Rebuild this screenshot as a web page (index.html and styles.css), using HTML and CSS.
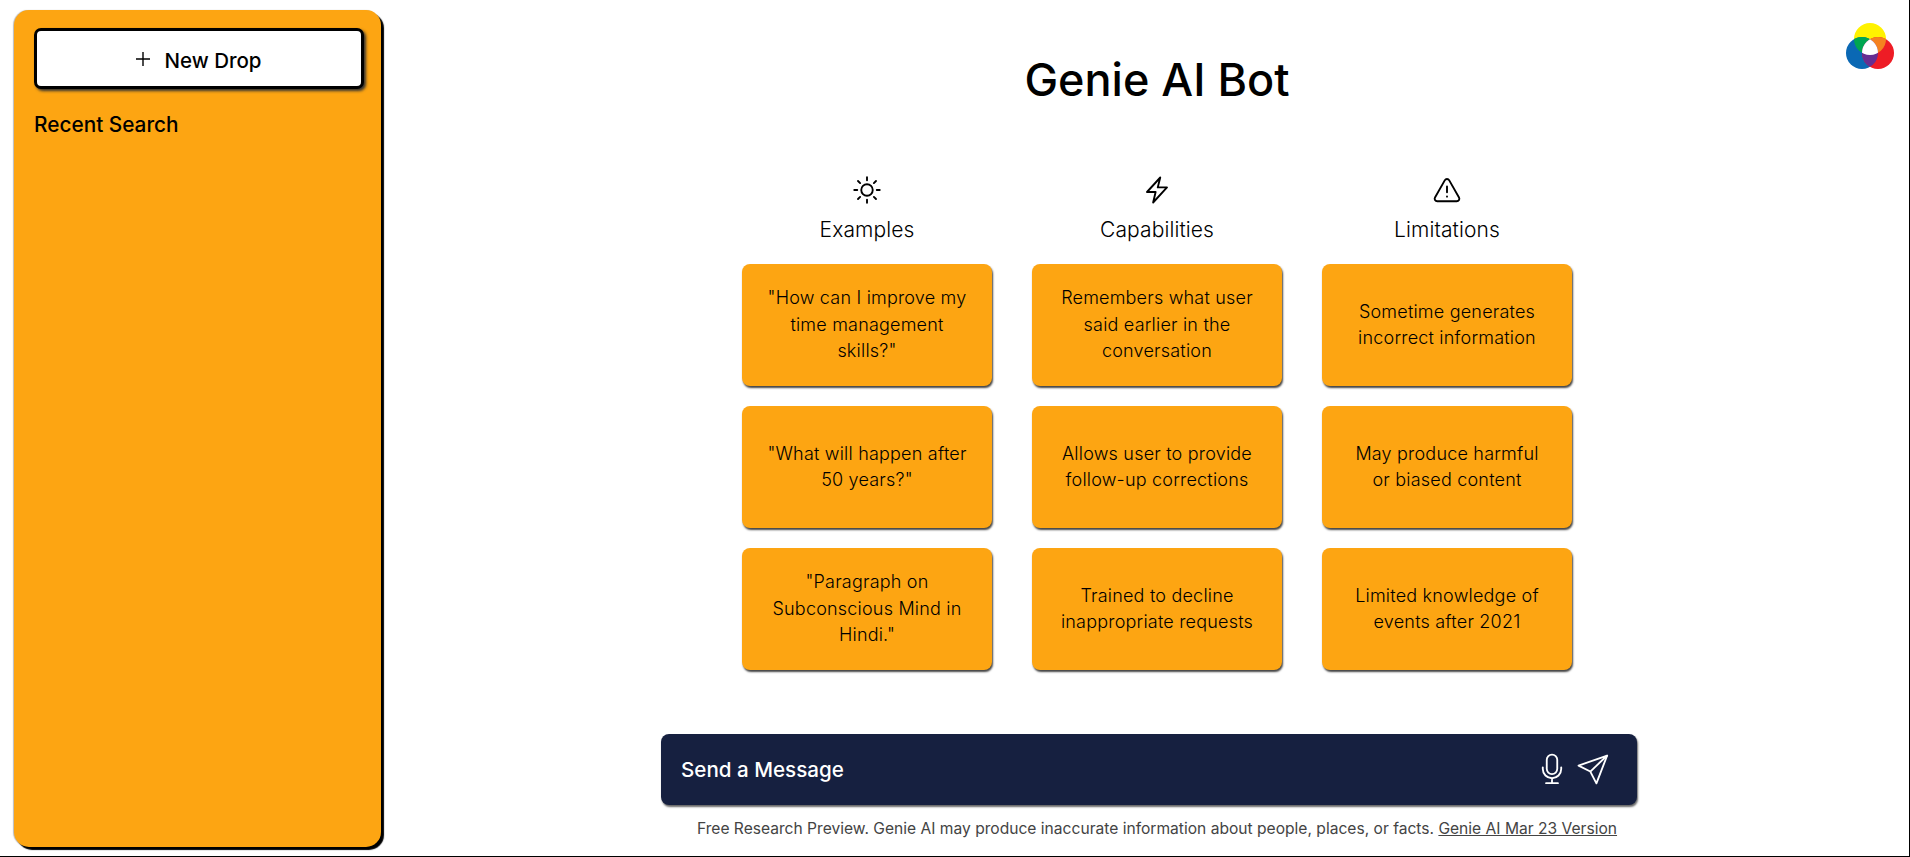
FILE: index.html
```html
<!DOCTYPE html>
<html lang="en">
<head>
<meta charset="utf-8">
<title>Genie AI Bot</title>
<link rel="stylesheet" href="styles.css">
</head>
<body>
<div class="app">
  <aside class="sidebar">
    <button class="new-drop"><svg class="plus" viewBox="0 0 14 14" width="14" height="14" fill="none" stroke="#000" stroke-width="1.4"><path d="M7 0v14M0 7h14"/></svg><span>New Drop</span></button>
    <h2 class="recent">Recent Search</h2>
  </aside>
  <main class="main">
    <h1 class="title">Genie AI Bot</h1>
    <div class="grid">
      <section class="col">
        <svg class="col-icon" viewBox="0 0 24 24" width="30" height="30" fill="none" stroke="#000" stroke-width="1.5" stroke-linecap="round"><circle cx="12" cy="12" r="4.6"/><path d="M12 1.800v2.400M12 19.800v2.400M1.800 12h2.400M19.800 12h2.400M4.800 4.800l1.700 1.700M17.500 17.500l1.700 1.700M4.800 19.200l1.700-1.700M17.500 6.500l1.700-1.700"/></svg>
        <h3 class="col-title">Examples</h3>
        <div class="card">"How can I improve my time management skills?"</div>
        <div class="card">"What will happen after 50 years?"</div>
        <div class="card">"Paragraph on Subconscious Mind in Hindi."</div>
      </section>
      <section class="col">
        <svg class="col-icon" viewBox="0 0 24 24" width="30" height="30" fill="none" stroke="#000" stroke-width="1.5" stroke-linejoin="round"><path d="M14.600 2 4 13.600h6.900L8.900 22 20 9.900h-7.400z"/></svg>
        <h3 class="col-title">Capabilities</h3>
        <div class="card">Remembers what user said earlier in the conversation</div>
        <div class="card">Allows user to provide follow-up corrections</div>
        <div class="card">Trained to decline inappropriate requests</div>
      </section>
      <section class="col">
        <svg class="col-icon" viewBox="0 0 24 24" width="30" height="30" fill="none" stroke="#000" stroke-width="1.5" stroke-linecap="round" stroke-linejoin="round"><path d="M12 3.200c-.8 0-1.400.4-1.800 1.100L2.400 18c-.8 1.400.2 3 1.800 3h15.600c1.600 0 2.600-1.600 1.800-3L13.800 4.300c-.4-.7-1-1.100-1.800-1.100z"/><path d="M12 9.200v4.600M12 17.200v.1"/></svg>
        <h3 class="col-title">Limitations</h3>
        <div class="card">Sometime generates incorrect information</div>
        <div class="card">May produce harmful or biased content</div>
        <div class="card">Limited knowledge of events after 2021</div>
      </section>
    </div>
    <div class="composer">
      <span class="prompt">Send a Message</span>
      <div class="composer-icons">
        <svg viewBox="0 0 24 24" width="34" height="34" fill="none" stroke="#fff" stroke-width="1.3" stroke-linecap="round"><rect x="8.300" y="1.800" width="7.400" height="13.800" rx="3.700"/><path d="M5.500 10.800v1.200a6.500 6.500 0 0 0 13 0v-1.200M12 18.500v3.500M7.800 22h8.400"/></svg>
        <svg viewBox="0 0 24 24" width="34" height="34" fill="none" stroke="#fff" stroke-width="1.3" stroke-linejoin="round"><path d="M22 2.500 1.800 9.600l8.300 4.200 4.300 8.300z"/><path d="M22 2.500 10.100 13.800"/></svg>
      </div>
    </div>
    <p class="note">Free Research Preview. Genie AI may produce inaccurate information about people, places, or facts. <a href="#">Genie AI Mar 23 Version</a></p>
  </main>
  <svg class="logo" viewBox="0 0 48 46" width="48" height="46">
    <defs>
      <clipPath id="clip-y"><circle cx="24" cy="16" r="16"/></clipPath>
      <clipPath id="clip-b"><circle cx="16" cy="30" r="16"/></clipPath>
      <clipPath id="clip-r"><circle cx="32" cy="30" r="16"/></clipPath>
    </defs>
    <circle cx="24" cy="16" r="16" fill="#fff200"/>
    <circle cx="16" cy="30" r="16" fill="#0a68b4"/>
    <circle cx="32" cy="30" r="16" fill="#ee1c25"/>
    <circle cx="16" cy="30" r="16" fill="#00a651" clip-path="url(#clip-y)"/>
    <circle cx="32" cy="30" r="16" fill="#f58220" clip-path="url(#clip-y)"/>
    <circle cx="32" cy="30" r="16" fill="#662d91" clip-path="url(#clip-b)"/>
    <g clip-path="url(#clip-y)"><circle cx="32" cy="30" r="16" fill="#fff" clip-path="url(#clip-b)"/></g>
  </svg>
</div>
</body>
</html>
```
FILE: styles.css
```css
* { box-sizing: border-box; }
html, body { margin: 0; padding: 0; height: 100%; background: #fff; overflow: hidden; }
body { font-family: "Inter", "Liberation Sans", sans-serif; color: #000; }
.app {
  position: relative;
  display: flex;
  width: 1910px;
  height: 857px;
  border-right: 1px solid #000;
  border-bottom: 1px solid #000;
}
.sidebar {
  flex: none;
  width: 367px;
  height: 837px;
  margin: 10px 0 0 14px;
  padding: 18px 20px;
  background: #fda512;
  border-radius: 15px;
  box-shadow: 3px 3px 1px #000, -1px 0 1px #bbb;
}
.new-drop {
  display: flex;
  align-items: center;
  justify-content: center;
  gap: 14px;
  width: 330px;
  height: 61px;
  padding-top: 4px;
  background: #fff;
  border: 3px solid #000;
  border-radius: 7px;
  box-shadow: 2px 2px 3px #333;
  font: 500 20.5px "Inter", sans-serif;
  color: #000;
}
.plus { display: block; margin-top: -2px; }
.recent { margin: 21px 0 0; font-size: 20.8px; font-weight: 500; line-height: 30px; }
.main {
  flex: 1;
  display: flex;
  flex-direction: column;
  align-items: center;
  padding-left: 24px;
}
.title { margin: 50px 0 0; font-size: 45px; line-height: 60px; font-weight: 500; }
.grid { display: flex; gap: 40px; margin-top: 65px; }
.col { width: 250px; display: flex; flex-direction: column; align-items: center; }
.col-icon { display: block; }
.col-title { margin: 11px 0 20px; font-size: 21px; line-height: 28px; font-weight: 300; letter-spacing: .1px; }
.card {
  display: flex;
  align-items: center;
  justify-content: center;
  width: 250px;
  height: 122px;
  margin-bottom: 20px;
  padding: 0 23px;
  text-align: center;
  background: #fda512;
  border-radius: 8px;
  box-shadow: 1px 2px 2px #444;
  font-size: 18px;
  font-weight: 350;
  line-height: 26.5px;
  letter-spacing: .2px;
}
.composer {
  display: flex;
  align-items: center;
  justify-content: space-between;
  width: 976px;
  height: 71px;
  margin: 44px 16px 0 0;
  padding: 0 27px 0 20px;
  background: #162040;
  border-radius: 8px;
  box-shadow: 1px 2px 2px #666;
  color: #fff;
}
.prompt { font-size: 20.6px; font-weight: 500; }
.composer-icons { display: flex; gap: 7px; margin-top: -1px; }
.note { margin: 14px 0 0; font-size: 15.6px; line-height: 20px; color: #444; }
.note a { color: #444; }
.logo { position: absolute; top: 23px; right: 15px; }
```
